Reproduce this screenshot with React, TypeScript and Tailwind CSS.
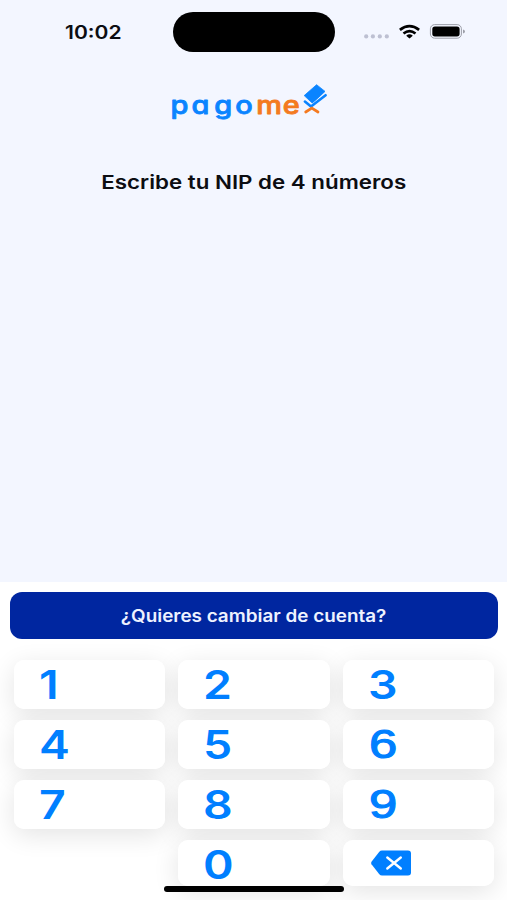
import clsx from 'clsx';

const KEYS = ['1', '2', '3', '4', '5', '6', '7', '8', '9', '', '0', 'delete'];

function StatusBar() {
  return (
    <div className="flex h-16 items-start">
      <div className="w-[173px] pt-[21px] pl-[65px]">
        <span className="inline-block origin-left scale-x-[1.17] text-[18px] leading-6 font-semibold text-[#0c0d12]">
          10:02
        </span>
      </div>
      <div className="mt-[12px] h-10 w-[162px] shrink-0 rounded-full bg-black" />
      <svg className="mt-[20px] ml-[25px]" width="112" height="24" viewBox="360 20 112 24">
        <g fill="#bdc0d2">
          <circle cx="366.2" cy="36.4" r="2.1" />
          <circle cx="372.9" cy="36.4" r="2.1" />
          <circle cx="379.8" cy="36.4" r="2.1" />
          <circle cx="386.8" cy="36.4" r="2.1" />
        </g>
        <g fill="none" stroke="#000" strokeWidth="2.7">
          <path d="M399.9 29.9 Q409.5 22.3 419.1 29.9" />
          <path d="M403.5 33.5 Q409.5 28.8 415.5 33.5" />
        </g>
        <path d="M406.2 35.7 Q409.5 33 412.8 35.7 L409.5 38.6Z" fill="#000" />
        <rect x="430.4" y="24.6" width="31" height="13.6" rx="4.2" fill="none" stroke="#9d9fa9" strokeWidth="1" />
        <rect x="432.3" y="26.5" width="27.3" height="9.9" rx="2.6" fill="#000" />
        <path d="M463 29.6 Q465 30 465 31.6 T463 33.6Z" fill="#9d9fa9" />
      </svg>
    </div>
  );
}

function Logo() {
  return (
    <svg
      className="mt-[16px] ml-[165px]"
      width="170"
      height="45"
      viewBox="165 80 170 45"
      role="img"
      aria-label="pagomex"
    >
      <g
        className="[font-feature-settings:'cv11']"
        fontFamily="Inter, sans-serif"
        fontSize="24.5"
        fontWeight="500"
        strokeWidth="0.8"
        strokeLinejoin="round"
        transform="translate(170.4 114) scale(1.18 1)"
      >
        <text x="0.2 17.8 37.1 54.9" y="0" fill="#0a84ff" stroke="#0a84ff">pago</text>
        <text x="72.8 95.3" y="0" fill="#f47a20" stroke="#f47a20">me</text>
      </g>
      <path d="M304.2 95.6 L316.6 84.7 L325 91.4 L312.4 103.2Z" fill="#0a84ff" stroke="#0a84ff" strokeWidth="0.8" strokeLinejoin="round" />
      <path d="M304.4 101.6 L311 107 L325.8 95.2" fill="none" stroke="#f3f6ff" strokeWidth="3.8" />
      <path d="M304.9 101.6 L311 106.6 L325.6 95.2" fill="none" stroke="#0a84ff" strokeWidth="2.6" strokeLinecap="round" strokeLinejoin="round" />
      <path d="M305.7 112 L311.8 108.2 L318 112" fill="none" stroke="#f47a20" strokeWidth="2.7" strokeLinecap="round" />
    </svg>
  );
}

function DeleteIcon() {
  return (
    <svg className="mt-[10px] ml-[27px]" width="42" height="27" viewBox="0 0 42 27">
      <path d="M12 0.5 H38 Q41 0.5 41 3.5 V22.5 Q41 25.5 38 25.5 H12 Q10.4 25.5 9.3 24.3 L1.5 14.3 Q0.6 13 1.5 11.7 L9.3 1.7 Q10.4 0.5 12 0.5Z" fill="#007fff" />
      <path d="M17.3 7.5 L30.8 18.5 M30.8 7.5 L17.3 18.5" fill="none" stroke="#fff" strokeWidth="2.4" strokeLinecap="round" />
    </svg>
  );
}

function Key({ value, short }: { value: string; short: boolean }) {
  if (!value) return <div />;

  // Inter's 6 and 9 have straight stems, these two need the rounder form
  const round = value === '6' || value === '9';

  return (
    <button
      type="button"
      aria-label={value}
      className={clsx(
        'relative flex items-start rounded-[10px] bg-white before:absolute before:inset-0 before:-z-10 before:rounded-[10px] before:shadow-[0_6px_26px_rgba(0,0,0,0.11)]',
        short ? 'h-[46px]' : 'h-[49px]',
      )}
    >
      {value === 'delete' ? (
        <DeleteIcon />
      ) : (
        <span
          className={clsx(
            'block w-fit origin-left text-[#007fff]',
            round
              ? "ml-[26px] scale-x-[1.27] font-['Liberation_Sans',sans-serif] text-[40px] leading-[48px] [-webkit-text-stroke:1.1px_#007fff]"
              : 'ml-[25px] scale-x-[1.19] text-[39px] leading-[49px] font-semibold',
          )}
        >
          {value}
        </span>
      )}
    </button>
  );
}

export default function App() {
  return (
    <div className="relative flex h-[900px] w-[507px] flex-col overflow-hidden bg-white font-['Inter',sans-serif]">
      <header className="h-[582px] shrink-0 bg-[#f3f6ff]">
        <StatusBar />
        <Logo />
        <h1 className="mt-[46px] text-center text-[19px] leading-6 font-semibold text-[#0c0d12]">
          <span className="inline-block scale-x-[1.175] whitespace-nowrap">Escribe tu NIP de 4 números</span>
        </h1>
      </header>

      <main className="pt-[10px]">
        <div className="pr-[9px] pl-[10px]">
          <button type="button" className="h-[47px] w-full rounded-[12px] bg-[#0026a0] pt-[3px] text-[17px] font-semibold text-[#eef2ff]">
            <span className="inline-block scale-x-[1.11] whitespace-nowrap">¿Quieres cambiar de cuenta?</span>
          </button>
        </div>

        <div className="isolate mt-[21px] grid grid-cols-3 gap-x-[13px] gap-y-[11px] pr-[13px] pl-[14px]">
          {KEYS.map((key, i) => (
            <Key key={i} value={key} short={i > 8} />
          ))}
        </div>
      </main>

      {/* home indicator */}
      <div className="absolute top-[886px] left-[164px] h-[6px] w-[180px] rounded-full bg-black" />
    </div>
  );
}
